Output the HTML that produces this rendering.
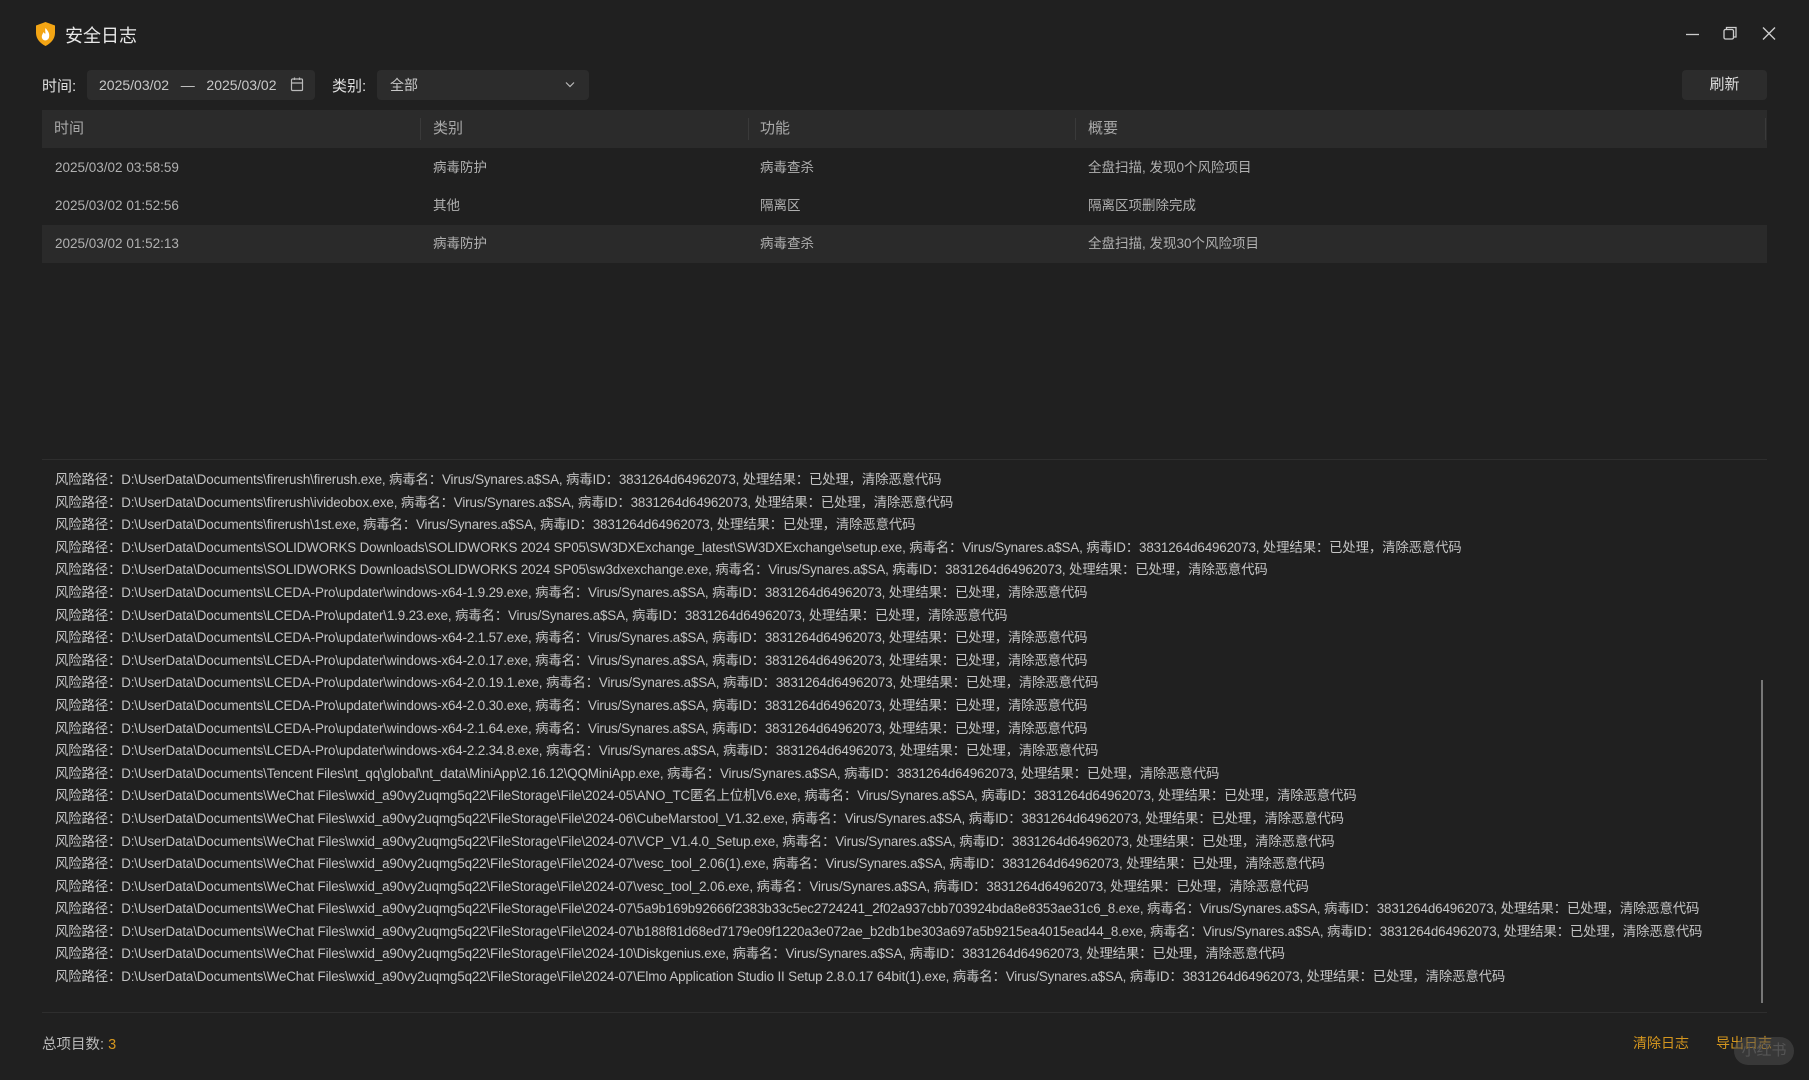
<!DOCTYPE html>
<html><head><meta charset="utf-8"><style>
*{margin:0;padding:0;box-sizing:border-box}
body{width:1809px;height:1080px;background:#202020;color:#c8c8c8;font-family:"Liberation Sans","Noto Sans CJK SC",sans-serif;position:relative;overflow:hidden}
.abs{position:absolute}
.title{left:65px;top:22px;font-size:18px;color:#e8e8e8}
.lbl{font-size:15px;color:#e0e0e0;top:75px}
.box{background:#2c2c2c;border-radius:4px;height:30px;top:70px;font-size:14px;color:#c8c8c8;line-height:30px;white-space:nowrap}
.hdr{left:42px;top:110px;width:1725px;height:38px;background:#2b2b2b;font-size:15px;color:#a8a8a8}
.hdr span{position:absolute;top:0;line-height:38px}
.sep{position:absolute;top:8px;width:1px;height:22px;background:#3a3a3a}
.row{left:42px;width:1725px;height:38px;font-size:13.5px;color:#b0b0b0}
.row span{position:absolute;top:0;line-height:38px}
.log{left:55px;top:469px;font-size:13.4px;line-height:22.6px;color:#c4c4c4;white-space:nowrap;letter-spacing:-0.15px}
</style></head><body>
<svg class="abs" style="left:34px;top:21px" width="23" height="26" viewBox="0 0 23 26"><path d="M11.5 1 L21 4.5 V12 C21 18 16.5 22.5 11.5 25 C6.5 22.5 2 18 2 12 V4.5 Z" fill="#f3a514"/><path d="M11.5 7 C14 10 16 12.5 15 16.5 C14 20 9 20.5 8 17 C7.2 14.5 9 12.5 9.5 11 C10.5 13 11.5 13 11.5 12 C11.2 10 11 9 11.5 7Z" fill="#fff"/></svg>
<div class="abs title">安全日志</div>
<svg class="abs" style="left:1686px;top:26px" width="110" height="16" viewBox="0 0 110 16"><path d="M0 8.5H13" stroke="#ccc" stroke-width="1.3"/><rect x="38" y="3.5" width="9.5" height="9.5" rx="1.5" fill="none" stroke="#ccc" stroke-width="1.3"/><path d="M40.5 3.5V1.5H50V11H47.5" fill="none" stroke="#ccc" stroke-width="1.3"/><path d="M77 1.5L89 13.5M89 1.5L77 13.5" stroke="#ccc" stroke-width="1.4"/></svg>
<div class="abs lbl" style="left:42px">时间:</div>
<div class="abs box" style="left:87px;width:228px;padding-left:12px">2025/03/02 &nbsp;&nbsp;— &nbsp;&nbsp;2025/03/02</div>
<svg class="abs" style="left:290px;top:77px" width="14" height="15" viewBox="0 0 14 15"><rect x="1.5" y="2" width="11" height="11.5" rx="1" fill="none" stroke="#bbb" stroke-width="1.2"/><path d="M1.5 6H12.5M4.5 0.5V3M9.5 0.5V3" stroke="#bbb" stroke-width="1.2"/></svg>
<div class="abs lbl" style="left:332px">类别:</div>
<div class="abs box" style="left:377px;width:212px;padding-left:13px">全部</div>
<svg class="abs" style="left:565px;top:81px" width="10" height="7" viewBox="0 0 10 7"><path d="M1 1.5L5 5.5L9 1.5" fill="none" stroke="#bbb" stroke-width="1.2"/></svg>
<div class="abs box" style="left:1682px;width:85px;text-align:center;font-size:15px;color:#ddd">刷新</div>
<div class="abs hdr"><span style="left:12px">时间</span><div class="sep" style="left:378px"></div><span style="left:391px">类别</span><div class="sep" style="left:706px"></div><span style="left:718px">功能</span><div class="sep" style="left:1033px"></div><span style="left:1046px">概要</span><div class="sep" style="left:1723px"></div></div>
<div class="abs row" style="top:149px"><span style="left:13px">2025/03/02 03:58:59</span><span style="left:391px">病毒防护</span><span style="left:718px">病毒查杀</span><span style="left:1046px">全盘扫描, 发现0个风险项目</span></div>
<div class="abs row" style="top:187px"><span style="left:13px">2025/03/02 01:52:56</span><span style="left:391px">其他</span><span style="left:718px">隔离区</span><span style="left:1046px">隔离区项删除完成</span></div>
<div class="abs row" style="top:225px;background:#2a2a2a"><span style="left:13px">2025/03/02 01:52:13</span><span style="left:391px">病毒防护</span><span style="left:718px">病毒查杀</span><span style="left:1046px">全盘扫描, 发现30个风险项目</span></div>
<div class="abs" style="left:42px;top:459px;width:1725px;height:1px;background:#2e2e2e"></div>
<div class="abs log">
风险路径：D:\UserData\Documents\firerush\firerush.exe, 病毒名：Virus/Synares.a$SA, 病毒ID：3831264d64962073, 处理结果：已处理，清除恶意代码<br>
风险路径：D:\UserData\Documents\firerush\ivideobox.exe, 病毒名：Virus/Synares.a$SA, 病毒ID：3831264d64962073, 处理结果：已处理，清除恶意代码<br>
风险路径：D:\UserData\Documents\firerush\1st.exe, 病毒名：Virus/Synares.a$SA, 病毒ID：3831264d64962073, 处理结果：已处理，清除恶意代码<br>
风险路径：D:\UserData\Documents\SOLIDWORKS Downloads\SOLIDWORKS 2024 SP05\SW3DXExchange_latest\SW3DXExchange\setup.exe, 病毒名：Virus/Synares.a$SA, 病毒ID：3831264d64962073, 处理结果：已处理，清除恶意代码<br>
风险路径：D:\UserData\Documents\SOLIDWORKS Downloads\SOLIDWORKS 2024 SP05\sw3dxexchange.exe, 病毒名：Virus/Synares.a$SA, 病毒ID：3831264d64962073, 处理结果：已处理，清除恶意代码<br>
风险路径：D:\UserData\Documents\LCEDA-Pro\updater\windows-x64-1.9.29.exe, 病毒名：Virus/Synares.a$SA, 病毒ID：3831264d64962073, 处理结果：已处理，清除恶意代码<br>
风险路径：D:\UserData\Documents\LCEDA-Pro\updater\1.9.23.exe, 病毒名：Virus/Synares.a$SA, 病毒ID：3831264d64962073, 处理结果：已处理，清除恶意代码<br>
风险路径：D:\UserData\Documents\LCEDA-Pro\updater\windows-x64-2.1.57.exe, 病毒名：Virus/Synares.a$SA, 病毒ID：3831264d64962073, 处理结果：已处理，清除恶意代码<br>
风险路径：D:\UserData\Documents\LCEDA-Pro\updater\windows-x64-2.0.17.exe, 病毒名：Virus/Synares.a$SA, 病毒ID：3831264d64962073, 处理结果：已处理，清除恶意代码<br>
风险路径：D:\UserData\Documents\LCEDA-Pro\updater\windows-x64-2.0.19.1.exe, 病毒名：Virus/Synares.a$SA, 病毒ID：3831264d64962073, 处理结果：已处理，清除恶意代码<br>
风险路径：D:\UserData\Documents\LCEDA-Pro\updater\windows-x64-2.0.30.exe, 病毒名：Virus/Synares.a$SA, 病毒ID：3831264d64962073, 处理结果：已处理，清除恶意代码<br>
风险路径：D:\UserData\Documents\LCEDA-Pro\updater\windows-x64-2.1.64.exe, 病毒名：Virus/Synares.a$SA, 病毒ID：3831264d64962073, 处理结果：已处理，清除恶意代码<br>
风险路径：D:\UserData\Documents\LCEDA-Pro\updater\windows-x64-2.2.34.8.exe, 病毒名：Virus/Synares.a$SA, 病毒ID：3831264d64962073, 处理结果：已处理，清除恶意代码<br>
风险路径：D:\UserData\Documents\Tencent Files\nt_qq\global\nt_data\MiniApp\2.16.12\QQMiniApp.exe, 病毒名：Virus/Synares.a$SA, 病毒ID：3831264d64962073, 处理结果：已处理，清除恶意代码<br>
风险路径：D:\UserData\Documents\WeChat Files\wxid_a90vy2uqmg5q22\FileStorage\File\2024-05\ANO_TC匿名上位机V6.exe, 病毒名：Virus/Synares.a$SA, 病毒ID：3831264d64962073, 处理结果：已处理，清除恶意代码<br>
风险路径：D:\UserData\Documents\WeChat Files\wxid_a90vy2uqmg5q22\FileStorage\File\2024-06\CubeMarstool_V1.32.exe, 病毒名：Virus/Synares.a$SA, 病毒ID：3831264d64962073, 处理结果：已处理，清除恶意代码<br>
风险路径：D:\UserData\Documents\WeChat Files\wxid_a90vy2uqmg5q22\FileStorage\File\2024-07\VCP_V1.4.0_Setup.exe, 病毒名：Virus/Synares.a$SA, 病毒ID：3831264d64962073, 处理结果：已处理，清除恶意代码<br>
风险路径：D:\UserData\Documents\WeChat Files\wxid_a90vy2uqmg5q22\FileStorage\File\2024-07\vesc_tool_2.06(1).exe, 病毒名：Virus/Synares.a$SA, 病毒ID：3831264d64962073, 处理结果：已处理，清除恶意代码<br>
风险路径：D:\UserData\Documents\WeChat Files\wxid_a90vy2uqmg5q22\FileStorage\File\2024-07\vesc_tool_2.06.exe, 病毒名：Virus/Synares.a$SA, 病毒ID：3831264d64962073, 处理结果：已处理，清除恶意代码<br>
风险路径：D:\UserData\Documents\WeChat Files\wxid_a90vy2uqmg5q22\FileStorage\File\2024-07\5a9b169b92666f2383b33c5ec2724241_2f02a937cbb703924bda8e8353ae31c6_8.exe, 病毒名：Virus/Synares.a$SA, 病毒ID：3831264d64962073, 处理结果：已处理，清除恶意代码<br>
风险路径：D:\UserData\Documents\WeChat Files\wxid_a90vy2uqmg5q22\FileStorage\File\2024-07\b188f81d68ed7179e09f1220a3e072ae_b2db1be303a697a5b9215ea4015ead44_8.exe, 病毒名：Virus/Synares.a$SA, 病毒ID：3831264d64962073, 处理结果：已处理，清除恶意代码<br>
风险路径：D:\UserData\Documents\WeChat Files\wxid_a90vy2uqmg5q22\FileStorage\File\2024-10\Diskgenius.exe, 病毒名：Virus/Synares.a$SA, 病毒ID：3831264d64962073, 处理结果：已处理，清除恶意代码<br>
风险路径：D:\UserData\Documents\WeChat Files\wxid_a90vy2uqmg5q22\FileStorage\File\2024-07\Elmo Application Studio II Setup 2.8.0.17 64bit(1).exe, 病毒名：Virus/Synares.a$SA, 病毒ID：3831264d64962073, 处理结果：已处理，清除恶意代码
</div>
<div class="abs" style="left:1761px;top:680px;width:2px;height:323px;background:#777"></div>
<div class="abs" style="left:42px;top:1012px;width:1725px;height:1px;background:#2e2e2e"></div>
<div class="abs" style="left:42px;top:1033px;font-size:14.5px;color:#bbb">总项目数: <span style="color:#d4961e">3</span></div>
<div class="abs" style="left:1633px;top:1033px;font-size:14px;color:#d4961e">清除日志</div>
<div class="abs" style="left:1716px;top:1033px;font-size:14px;color:#d4961e">导出日志</div>
<div class="abs" style="left:1734px;top:1037px;width:60px;height:28px;border-radius:14px;background:rgba(80,80,80,0.5);color:#555;font-size:15px;text-align:center;line-height:28px">小红书</div>
</body></html>
